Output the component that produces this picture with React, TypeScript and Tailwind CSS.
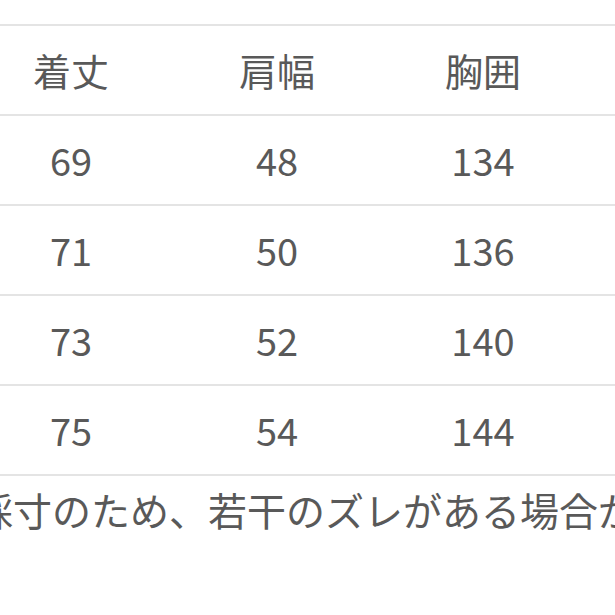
const header = ["着丈", "肩幅", "胸囲"];

const rows = [
  ["69", "48", "134"],
  ["71", "50", "136"],
  ["73", "52", "140"],
  ["75", "54", "144"],
];

function Row({ cells }: { cells: string[] }) {
  return (
    <div className="grid grid-cols-[206px_206px_206px] h-[90px] items-center border-b-2 border-[#e4e4e4]">
      {cells.map((c, i) => (
        <div key={i} className="text-center">
          {c}
        </div>
      ))}
    </div>
  );
}

export default function App() {
  return (
    <div
      className="w-[615px] h-[615px] overflow-hidden bg-white text-[#595959] text-[38px] leading-none"
      style={{ fontFamily: '"Noto Sans CJK JP", "Noto Sans", sans-serif' }}
    >
      <div className="pt-[24px]">
        <div className="-ml-[32px] w-[700px] border-t-2 border-[#e4e4e4]">
          <Row cells={header} />
          {rows.map((r, i) => (
            <Row key={i} cells={r} />
          ))}
        </div>
        <div className="-ml-[26px] mt-[14px] whitespace-nowrap text-[39px]">
          採寸のため、若干のズレがある場合がございます。
        </div>
      </div>
    </div>
  );
}
